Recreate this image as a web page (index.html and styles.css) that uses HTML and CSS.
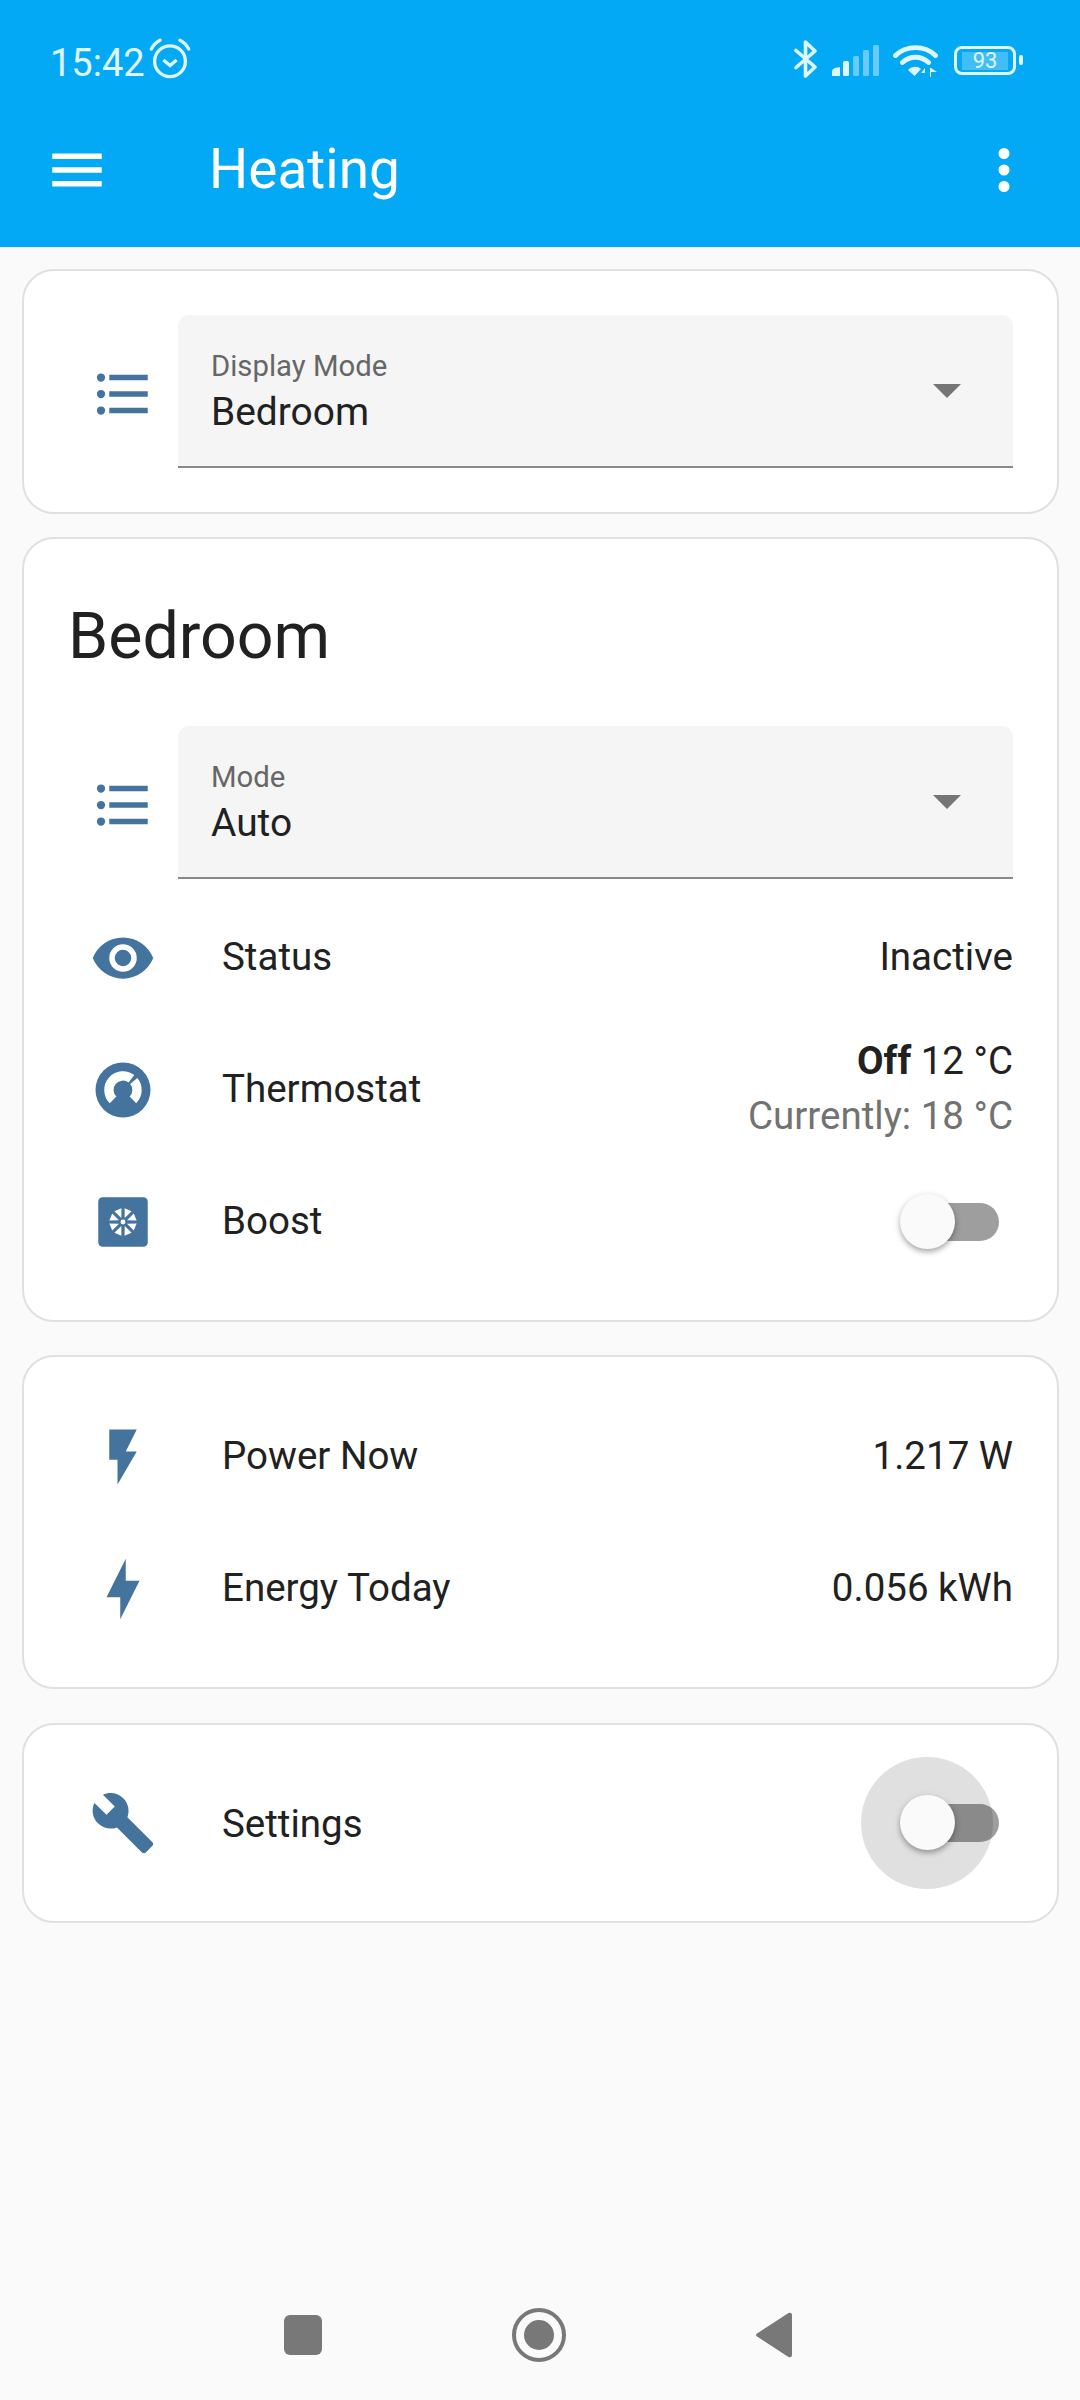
FILE: index.html
```html
<!DOCTYPE html>
<html lang="en">
<head>
<meta charset="utf-8">
<title>Heating</title>
<link rel="stylesheet" href="styles.css">
</head>
<body>
<header class="appbar">
  <div class="statusbar">
    <div class="status-left">
      <span class="clock">15:42</span>
      <svg class="alarm" viewBox="0 0 40 40"><circle cx="20" cy="22" r="14" fill="none" stroke="currentColor" stroke-width="3"/><path d="M14 21l6 5 6-5" fill="none" stroke="currentColor" stroke-width="3"/><path d="M3 11C5 7 7 5 11 3M37 11C35 7 33 5 29 3" fill="none" stroke="currentColor" stroke-width="3" stroke-linecap="round"/></svg>
    </div>
    <div class="status-right">
      <svg class="bt" viewBox="0 0 24 38"><path d="M2 10.5L21 27L11.5 36V2L21 11L2 27.5" fill="none" stroke="currentColor" stroke-width="3.6" stroke-linecap="round" stroke-linejoin="round"/></svg>
      <svg class="signal" viewBox="0 0 47 31"><path d="M0 31V27Q0 24 3 23L8 22V31Z" fill="currentColor"/><rect x="11" y="16" width="6" height="15" rx="1.5" fill="currentColor"/><g fill="currentColor" opacity=".45"><rect x="21" y="11" width="6" height="20" rx="1.5"/><rect x="31" y="5" width="6" height="26" rx="1.5"/><rect x="41" y="0" width="6" height="31" rx="1.5"/></g></svg>
      <svg class="wifi" viewBox="0 0 45 33"><path d="M2.5 11.5C13 1 32 1 42.5 11.5M9.5 18.5C17 11.5 28 11.5 35.500 18.500" fill="none" stroke="currentColor" stroke-width="4.8" stroke-linecap="round"/><path d="M15 26C19 22 25 22 28 25L21.500 32Z" fill="currentColor"/><path d="M32 33V24L28 29H32M37 24V33H38V28H44L38 24Z" fill="currentColor"/></svg>
      <div class="battery"><div class="battery-body"><span class="battery-level">93</span></div><span class="battery-cap"></span></div>
    </div>
  </div>
  <div class="toolbar">
    <svg class="icon white" viewBox="0 0 24 24"><path d="M3,6H21V8H3V6M3,11H21V13H3V11M3,16H21V18H3V16Z"/></svg>
    <h1 class="app-title">Heating</h1>
    <svg class="icon white" viewBox="0 0 24 24"><path d="M12,16A2,2 0 0,1 14,18A2,2 0 0,1 12,20A2,2 0 0,1 10,18A2,2 0 0,1 12,16M12,10A2,2 0 0,1 14,12A2,2 0 0,1 12,14A2,2 0 0,1 10,12A2,2 0 0,1 12,10M12,4A2,2 0 0,1 14,6A2,2 0 0,1 12,8A2,2 0 0,1 10,6A2,2 0 0,1 12,4Z"/></svg>
  </div>
</header>

<main class="cards">
  <section class="card card-select">
    <div class="select-row">
      <svg class="icon blue" viewBox="0 0 24 24"><path d="M7,5H21V7H7V5M7,13V11H21V13H7M4,4.5A1.5,1.5 0 0,1 5.5,6A1.5,1.5 0 0,1 4,7.5A1.5,1.5 0 0,1 2.5,6A1.5,1.5 0 0,1 4,4.5M4,10.5A1.5,1.5 0 0,1 5.5,12A1.5,1.5 0 0,1 4,13.5A1.5,1.5 0 0,1 2.5,12A1.5,1.5 0 0,1 4,10.5M7,19V17H21V19H7M4,16.5A1.5,1.5 0 0,1 5.5,18A1.5,1.5 0 0,1 4,19.5A1.5,1.5 0 0,1 2.5,18A1.5,1.5 0 0,1 4,16.5Z"/></svg>
      <div class="select">
        <div class="select-text"><span class="select-label">Display Mode</span><span class="select-value">Bedroom</span></div>
        <span class="caret"></span>
      </div>
    </div>
  </section>

  <section class="card card-bedroom">
    <h2 class="card-title">Bedroom</h2>
    <div class="select-row">
      <svg class="icon blue" viewBox="0 0 24 24"><path d="M7,5H21V7H7V5M7,13V11H21V13H7M4,4.5A1.5,1.5 0 0,1 5.5,6A1.5,1.5 0 0,1 4,7.5A1.5,1.5 0 0,1 2.5,6A1.5,1.5 0 0,1 4,4.5M4,10.5A1.5,1.5 0 0,1 5.5,12A1.5,1.5 0 0,1 4,13.5A1.5,1.5 0 0,1 2.5,12A1.5,1.5 0 0,1 4,10.5M7,19V17H21V19H7M4,16.5A1.5,1.5 0 0,1 5.5,18A1.5,1.5 0 0,1 4,19.5A1.5,1.5 0 0,1 2.5,18A1.5,1.5 0 0,1 4,16.5Z"/></svg>
      <div class="select">
        <div class="select-text"><span class="select-label">Mode</span><span class="select-value">Auto</span></div>
        <span class="caret"></span>
      </div>
    </div>
    <div class="row">
      <svg class="icon blue" viewBox="0 0 24 24"><path d="M12,9A3,3 0 0,0 9,12A3,3 0 0,0 12,15A3,3 0 0,0 15,12A3,3 0 0,0 12,9M12,17A5,5 0 0,1 7,12A5,5 0 0,1 12,7A5,5 0 0,1 17,12A5,5 0 0,1 12,17M12,4.5C7,4.5 2.73,7.61 1,12C2.73,16.39 7,19.5 12,19.5C17,19.5 21.27,16.39 23,12C21.27,7.61 17,4.5 12,4.5Z"/></svg>
      <span class="row-name">Status</span>
      <span class="row-value">Inactive</span>
    </div>
    <div class="row">
      <svg class="icon blue" viewBox="0 0 24 24"><circle cx="12" cy="12" r="10"/><path class="cut" d="M8.39 15.61A5.1 5.1 0 0 1 15.07 7.93M15.91 8.72A5.1 5.1 0 0 1 15.61 15.61"/></svg>
      <span class="row-name">Thermostat</span>
      <div class="thermo"><span class="row-value"><b>Off</b> 12 °C</span><span class="row-sub">Currently: 18 °C</span></div>
    </div>
    <div class="row">
      <svg class="icon blue" viewBox="0 0 24 24"><rect x="3" y="3" width="18" height="18" rx="1.6"/><g class="cut-fill"><circle cx="12" cy="12" r=".9"/><path d="M12.61 10.52L12.57 7.03L15.11 8.09Z"/><path transform="rotate(45 12 12)" d="M12.61 10.52L12.57 7.03L15.11 8.09Z"/><path transform="rotate(90 12 12)" d="M12.61 10.52L12.57 7.03L15.11 8.09Z"/><path transform="rotate(135 12 12)" d="M12.61 10.52L12.57 7.03L15.11 8.09Z"/><path transform="rotate(180 12 12)" d="M12.61 10.52L12.57 7.03L15.11 8.09Z"/><path transform="rotate(225 12 12)" d="M12.61 10.52L12.57 7.03L15.11 8.09Z"/><path transform="rotate(270 12 12)" d="M12.61 10.52L12.57 7.03L15.11 8.09Z"/><path transform="rotate(315 12 12)" d="M12.61 10.52L12.57 7.03L15.11 8.09Z"/></g></svg>
      <span class="row-name">Boost</span>
      <div class="switch"><span class="track"></span><span class="thumb"></span></div>
    </div>
  </section>

  <section class="card card-power">
    <div class="row">
      <svg class="icon blue" viewBox="0 0 24 24"><path d="M7,2V13H10V22L17,10H13L17,2H7Z"/></svg>
      <span class="row-name">Power Now</span>
      <span class="row-value">1.217 W</span>
    </div>
    <div class="row">
      <svg class="icon blue" viewBox="0 0 24 24"><path d="M11 15H6L13 1V9H18L11 23V15Z"/></svg>
      <span class="row-name">Energy Today</span>
      <span class="row-value">0.056 kWh</span>
    </div>
  </section>

  <section class="card card-settings">
    <div class="row">
      <svg class="icon blue" viewBox="0 0 24 24"><path d="M22.7,19L13.6,9.9C14.5,7.6 14,4.9 12.1,3C10.1,1 7.1,0.6 4.7,1.7L9,6L6,9L1.6,4.7C0.4,7.1 0.9,10.1 2.9,12.1C4.8,14 7.5,14.5 9.8,13.6L18.9,22.7C19.3,23.1 19.9,23.1 20.3,22.7L22.6,20.4C23.1,20 23.1,19.3 22.7,19Z"/></svg>
      <span class="row-name">Settings</span>
      <div class="switch"><span class="track"></span><span class="ripple"></span><span class="thumb"></span></div>
    </div>
  </section>
</main>

<nav class="navbar">
  <span class="nav-square"></span>
  <span class="nav-home"><span class="nav-home-dot"></span></span>
  <svg class="nav-back" viewBox="0 0 37 46"><path d="M33.500 1L2 21.500Q0 23 2 24.500L33.500 45Q37 46 37 43V3Q37 0 33.500 1Z"/></svg>
</nav>
</body>
</html>
```
FILE: styles.css
```css
* { box-sizing: border-box; }
html, body { margin: 0; padding: 0; }
body {
  width: 1080px;
  height: 2400px;
  background: #fafafa;
  color: #212121;
  font-family: Roboto, "Noto Sans", sans-serif;
  display: flex;
  flex-direction: column;
}
.appbar { height: 247px; background: #03a9f4; color: #fff; flex: none; }
.statusbar {
  height: 120px;
  padding: 0 57px 0 50px;
  display: flex;
  justify-content: space-between;
  align-items: center;
  color: #e0f6ff;
}
.status-left, .status-right { display: flex; align-items: center; }
.clock { font-size: 38px; line-height: 44px; margin-top: 5px; }
.alarm { width: 44px; height: 44px; margin-left: 3px; margin-top: -2px; }
.bt { width: 24px; height: 38px; margin-right: 14px; margin-top: -2px; }
.signal { width: 47px; height: 31px; margin-right: 14px; margin-top: 1px; }
.wifi { width: 45px; height: 33px; margin-right: 16px; }
.battery { display: flex; align-items: center; }
.battery-body {
  width: 62px; height: 29px;
  border: 3px solid #e0f6ff;
  border-radius: 8px;
  padding: 3px 5px 2px;
  display: flex;
}
.battery-level {
  flex: 1;
  background: rgba(255,255,255,.25);
  font-size: 22px;
  line-height: 18px;
  text-align: center;
}
.battery-cap { width: 4px; height: 10px; margin-left: 3px; background: #e0f6ff; border-radius: 2px; }
.toolbar {
  height: 127px;
  padding: 0 43px 27px 43.5px;
  display: flex;
  align-items: center;
}
.icon { width: 66px; height: 66px; flex: none; display: block; }
.white { fill: #fff; }
.blue { fill: #44739e; }
.cut { fill: none; stroke: #fff; stroke-width: 3.4; }
.cut-fill { fill: #fff; }
.app-title { font-size: 55px; font-weight: 400; line-height: 66px; margin: -2px 0 0 99.5px; flex: 1; }

.cards { padding: 22px 21px 0 22px; display: flex; flex-direction: column; }
.card {
  background: #fff;
  border: 2px solid #e0e0e0;
  border-radius: 32px;
  width: 1037px;
}
.card-select { height: 245px; padding: 44px 44px 0 66px; margin-bottom: 23px; }
.card-bedroom { height: 785px; padding: 0 44px 0 66px; margin-bottom: 33px; }
.card-power { height: 334px; padding: 34px 44px 0 66px; margin-bottom: 34px; }
.card-settings { height: 200px; padding: 32px 44px 0 66px; }
.card-settings .row-name { margin-bottom: 0; }
.card-title { font-size: 64.5px; font-weight: 400; line-height: 88px; margin: 53px 0 0 -22px; height: 134px; }
.card-bedroom .select-row { margin-bottom: 13px; }
.select-row { display: flex; align-items: center; height: 153px; }
.select-row .icon { margin-top: 4px; }
.select {
  margin-left: 22px;
  flex: 1;
  height: 153px;
  background: #f5f5f5;
  border-bottom: 2px solid #8a8a8a;
  border-radius: 11px 11px 0 0;
  display: flex;
  align-items: center;
  padding: 0 52px 0 33px;
}
.select-text { flex: 1; display: flex; flex-direction: column; margin-top: 6px; }
.select-label { font-size: 29.3px; line-height: 36px; color: #666; }
.select-value { font-size: 38.9px; line-height: 55px; color: #212121; }
.caret { width: 0; height: 0; border-left: 14px solid transparent; border-right: 14px solid transparent; border-top: 14px solid #757575; }
.row { display: flex; align-items: center; height: 132px; }
.row-name { font-size: 38.5px; margin: 0 0 3px 66px; flex: 1; }
.row-value { font-size: 38.5px; margin-bottom: 3px; }
.thermo { display: flex; flex-direction: column; align-items: flex-end; line-height: 55px; margin-bottom: 5px; }
.thermo .row-value { margin-bottom: 0; }
.row-sub { font-size: 38.5px; color: #727272; }
.switch { position: relative; width: 100px; height: 66px; flex: none; margin-right: 13px; }
.track { position: absolute; left: 28px; top: 14px; width: 71px; height: 38px; border-radius: 19px; background: #9e9e9e; }
.thumb { position: absolute; left: 0; top: 5px; width: 55px; height: 55px; border-radius: 50%; background: #fafafa; box-shadow: 0 3px 5px rgba(0,0,0,.25), 0 2px 8px rgba(0,0,0,.12); }
.ripple { position: absolute; left: -39px; top: -33px; width: 132px; height: 132px; border-radius: 50%; background: rgba(0,0,0,.12); }
.navbar {
  margin-top: auto;
  height: 131px;
  padding-left: 284px;
  display: flex;
  align-items: center;
  flex: none;
}
.nav-square { width: 38px; height: 40px; border-radius: 6px; background: #787878; }
.nav-home { width: 54px; height: 54px; margin-left: 190px; border: 4px solid #787878; border-radius: 50%; display: flex; align-items: center; justify-content: center; }
.nav-home-dot { width: 30px; height: 30px; border-radius: 50%; background: #787878; }
.nav-back { width: 37px; height: 46px; margin-left: 189px; fill: #787878; }
```
